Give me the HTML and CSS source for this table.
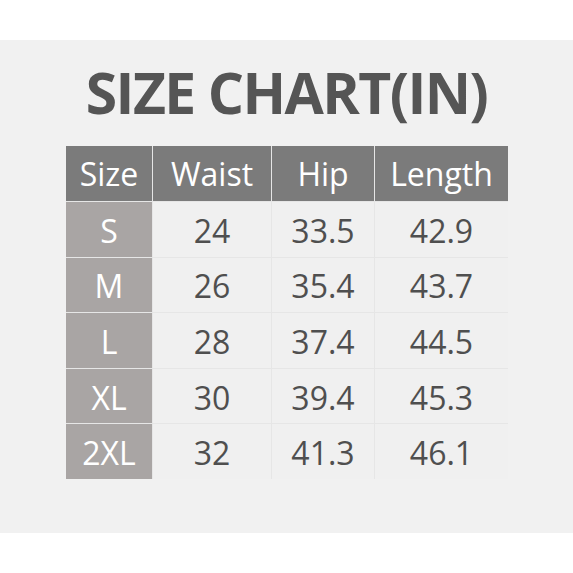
FILE: index.html
```html
<!DOCTYPE html>
<html>
<head>
<meta charset="utf-8">
<link rel="stylesheet" href="styles.css">
</head>
<body>
<div class="panel">
  <h1 class="title">SIZE CHART(IN)</h1>
  <div class="chart">
    <div class="cell head">Size</div><div class="cell head">Waist</div><div class="cell head">Hip</div><div class="cell head">Length</div>
    <div class="cell size">S</div><div class="cell">24</div><div class="cell">33.5</div><div class="cell">42.9</div>
    <div class="cell size">M</div><div class="cell">26</div><div class="cell">35.4</div><div class="cell">43.7</div>
    <div class="cell size">L</div><div class="cell">28</div><div class="cell">37.4</div><div class="cell">44.5</div>
    <div class="cell size">XL</div><div class="cell">30</div><div class="cell">39.4</div><div class="cell">45.3</div>
    <div class="cell size">2XL</div><div class="cell">32</div><div class="cell">41.3</div><div class="cell">46.1</div>
  </div>
</div>
</body>
</html>
```
FILE: styles.css
```css
html, body { margin: 0; padding: 0; background: #ffffff; }
body { width: 573px; height: 573px; overflow: hidden; font-family: "Open Sans", "Liberation Sans", sans-serif; }
.panel {
  margin-top: 40px;
  height: 493px;
  background: #f1f1f1;
  box-sizing: border-box;
  padding-top: 13px;
}
.title {
  margin: 0;
  height: 93px;
  line-height: 78px;
  text-align: center;
  font-size: 57px;
  font-weight: 700;
  color: #555555;
  letter-spacing: -1.6px;
}
.chart {
  margin-left: 66px;
  width: 442px;
  display: grid;
  grid-template-columns: 86px 118px 102px 133px;
  grid-template-rows: 55px repeat(5, 54.6px);
  column-gap: 1px;
  row-gap: 1px;
  background: #e6e6e6;
}
.cell {
  display: flex;
  align-items: center;
  justify-content: center;
  padding-top: 2px;
  box-sizing: border-box;
  background: #f0f0f0;
  color: #4f4f4f;
  font-size: 32px;
}
.head { background: #7b7b7b; color: #ffffff; padding-top: 0; }
.size { background: #a9a5a4; color: #ffffff; }
```
